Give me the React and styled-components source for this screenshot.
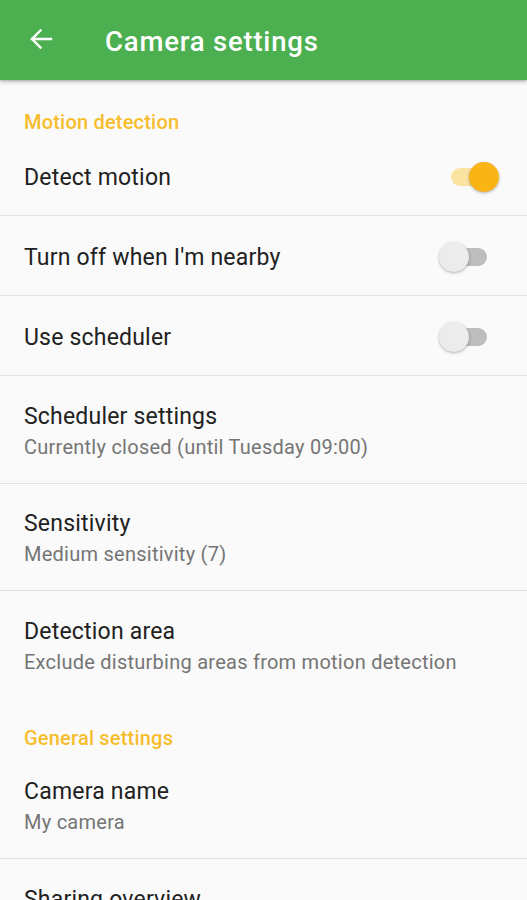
import React from "react";
import styled, { createGlobalStyle } from "styled-components";

const Global = createGlobalStyle`
  html, body { margin: 0; padding: 0; background: #fafafa; }
  body { font-family: Roboto, "Noto Sans", sans-serif; -webkit-font-smoothing: antialiased; }
  * { box-sizing: border-box; }
`;

const Page = styled.div`
  width: 527px;
  height: 900px;
  overflow: hidden;
  background: #fafafa;
`;

const AppBar = styled.header`
  position: relative;
  z-index: 2;
  height: 80px;
  background: #4caf50;
  display: flex;
  align-items: center;
  padding-left: 28px;
  box-shadow: 0 2px 4px rgba(0, 0, 0, 0.22), 0 1px 2px rgba(0, 0, 0, 0.12);
`;

const BackButton = styled.button`
  border: 0;
  padding: 0;
  background: transparent;
  width: 26px;
  height: 26px;
  display: flex;
  align-items: center;
  justify-content: center;
  margin-right: 51px;
  margin-top: -2px;
`;

const Title = styled.h1`
  margin: 0;
  font-size: 27.5px;
  font-weight: 500;
  color: #fff;
  letter-spacing: 0.8px;
  margin-top: 2px;
`;

const SectionTitle = styled.div`
  height: ${(p) => p.$h}px;
  display: flex;
  align-items: flex-end;
  padding: 0 24px ${(p) => p.$pb}px;
  font-size: 20px;
  line-height: 24px;
  font-weight: 500;
  letter-spacing: 0.2px;
  color: #f6bd2c;
`;

const Row = styled.div`
  height: ${(p) => (p.$two ? 107.5 : 80)}px;
  display: flex;
  align-items: center;
  justify-content: space-between;
  padding: ${(p) => (p.$two ? "4px 28px 0 24px" : "4px 28px 0 24px")};
  border-bottom: ${(p) => (p.$noDivider ? "none" : "1.5px solid #e2e2e2")};
`;

const Texts = styled.div`
  display: flex;
  flex-direction: column;
  gap: 3px;
`;

const Primary = styled.div`
  font-size: 23px;
  color: #212121;
  line-height: 28px;
  letter-spacing: 0.2px;
`;

const Secondary = styled.div`
  font-size: 20px;
  color: #757575;
  line-height: 26px;
  letter-spacing: 0.25px;
`;

const Switch = styled.div`
  position: relative;
  width: 60px;
  height: 32px;
  flex-shrink: 0;
  margin-top: -2px;
`;

const Track = styled.div`
  position: absolute;
  left: 12px;
  top: 7px;
  width: 36px;
  height: 18px;
  border-radius: 9px;
  background: ${(p) => (p.$on ? "#fbe3a2" : "#bdbdbd")};
`;

const Thumb = styled.div`
  position: absolute;
  top: 1px;
  left: ${(p) => (p.$on ? 30 : 0)}px;
  width: 30px;
  height: 30px;
  border-radius: 50%;
  background: ${(p) => (p.$on ? "#fbb416" : "#ececec")};
  box-shadow: 0 1px 3px rgba(0, 0, 0, 0.3);
`;

const Toggle = ({ on }) => (
  <Switch>
    <Track $on={on} />
    <Thumb $on={on} />
  </Switch>
);

const Item = ({ title, subtitle, toggle, noDivider }) => (
  <Row $two={!!subtitle} $noDivider={noDivider}>
    <Texts>
      <Primary>{title}</Primary>
      {subtitle && <Secondary>{subtitle}</Secondary>}
    </Texts>
    {toggle !== undefined && <Toggle on={toggle} />}
  </Row>
);

export default function App() {
  return (
    <Page>
      <Global />
      <AppBar>
        <BackButton aria-label="Back">
          <svg width="24" height="24" viewBox="0 0 24 24">
            <path
              d="M22 12H3M11.5 3.5L3 12l8.5 8.5"
              fill="none"
              stroke="#fff"
              strokeWidth="2.4"
              strokeLinecap="square"
            />
          </svg>
        </BackButton>
        <Title>Camera settings</Title>
      </AppBar>
      <SectionTitle $h={56} $pb={2}>Motion detection</SectionTitle>
      <Item title="Detect motion" toggle={true} />
      <Item title="Turn off when I'm nearby" toggle={false} />
      <Item title="Use scheduler" toggle={false} />
      <Item title="Scheduler settings" subtitle="Currently closed (until Tuesday 09:00)" />
      <Item title="Sensitivity" subtitle="Medium sensitivity (7)" />
      <Item title="Detection area" subtitle="Exclude disturbing areas from motion detection" noDivider />
      <SectionTitle $h={53} $pb={2}>General settings</SectionTitle>
      <Item title="Camera name" subtitle="My camera" />
      <Item title="Sharing overview" subtitle="Manage who can view this camera" />
    </Page>
  );
}
